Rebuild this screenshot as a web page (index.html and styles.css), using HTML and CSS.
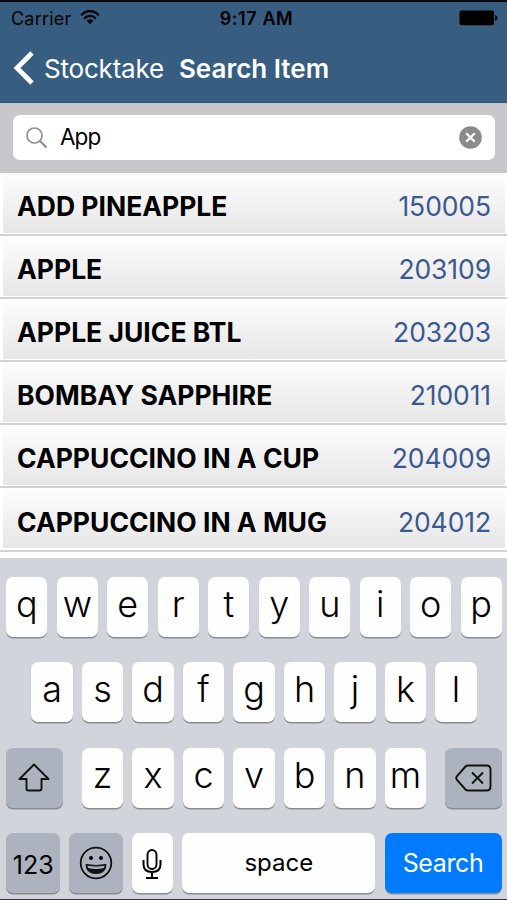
FILE: index.html
```html
<!DOCTYPE html>
<html lang="en">
<head>
    <meta charset="UTF-8">
    <meta name="viewport" content="width=device-width, initial-scale=1.0">
    <title>Search Item</title>
    <link rel="stylesheet" href="styles.css">
</head>
<body>
    <div class="phone">
        <header class="header">
            <div class="status">
                <div class="carrier">
                    <span>Carrier</span>
                    <svg class="wifi" viewBox="0 0 20 15" width="20" height="15">
                        <path d="M1.2 5.2C6-.4 14-.4 18.800 5.200M4.200 8.700C7.500 5 12.500 5 15.800 8.700" fill="none" stroke="#000" stroke-width="2.300"/>
                        <path d="M6.700 10.800Q10 7.800 13.300 10.800L10 14.200Z"/>
                    </svg>
                </div>
                <span class="time">9:17 AM</span>
                <svg class="battery" viewBox="0 0 39 16" width="39" height="16">
                    <rect x="0.500" y="0.500" width="34.500" height="14.800" rx="2"/>
                    <path d="M36 5Q38.500 6 38.500 8T36 11Z"/>
                </svg>
            </div>
            <nav class="nav">
                <svg class="back" viewBox="0 0 22 34" width="22" height="34">
                    <path d="M20 2L5 17L20 32" fill="none" stroke="#fff" stroke-width="4.800"/>
                </svg>
                <a class="nav-back">Stocktake</a>
                <h1 class="nav-title">Search Item</h1>
            </nav>
        </header>

        <div class="search-bar">
            <div class="search-field">
                <svg viewBox="0 0 22 22" width="22" height="22">
                    <circle cx="8.500" cy="8.500" r="7.500" fill="none" stroke="#8e8e93" stroke-width="1.700"/>
                    <path d="M13.700 13.700L20.500 20.500" stroke="#8e8e93" stroke-width="2.200"/>
                </svg>
                <span class="search-text">App</span>
                <svg viewBox="0 0 23 23" width="23" height="23">
                    <circle cx="11.500" cy="11.500" r="11.300" fill="#8b8b8b"/>
                    <path d="M7.200 7.200L15.800 15.800M15.800 7.200L7.200 15.800" stroke="#fff" stroke-width="2.300"/>
                </svg>
            </div>
        </div>

        <ul class="items">
            <li class="item"><span class="name">ADD PINEAPPLE</span><span class="code">150005</span></li>
            <li class="item"><span class="name">APPLE</span><span class="code">203109</span></li>
            <li class="item"><span class="name">APPLE JUICE BTL</span><span class="code">203203</span></li>
            <li class="item"><span class="name">BOMBAY SAPPHIRE</span><span class="code">210011</span></li>
            <li class="item"><span class="name">CAPPUCCINO IN A CUP</span><span class="code">204009</span></li>
            <li class="item"><span class="name">CAPPUCCINO IN A MUG</span><span class="code">204012</span></li>
        </ul>

        <div class="keyboard">
            <div class="keys">
                <span class="key">q</span><span class="key">w</span><span class="key">e</span><span class="key">r</span><span class="key">t</span><span class="key">y</span><span class="key">u</span><span class="key">i</span><span class="key">o</span><span class="key">p</span>
            </div>
            <div class="keys">
                <span class="key">a</span><span class="key">s</span><span class="key">d</span><span class="key">f</span><span class="key">g</span><span class="key">h</span><span class="key">j</span><span class="key">k</span><span class="key">l</span>
            </div>
            <div class="keys keys-wide">
                <span class="key dark shift">
                    <svg viewBox="0 0 32 29" width="32" height="29">
                        <path d="M16 1.500L30.500 16H23.500V25.500Q23.500 27.500 21.500 27.500H10.500Q8.500 27.500 8.500 25.500V16H1.500Z" fill="none" stroke="#111" stroke-width="1.900" stroke-linejoin="round"/>
                    </svg>
                </span>
                <div class="letters">
                    <span class="key">z</span><span class="key">x</span><span class="key">c</span><span class="key">v</span><span class="key">b</span><span class="key">n</span><span class="key">m</span>
                </div>
                <span class="key dark delete">
                    <svg viewBox="0 0 37 28" width="37" height="28">
                        <path d="M13 1.500H31.500Q35.500 1.500 35.500 5.500V22.500Q35.500 26.500 31.500 26.500H13Q11.500 26.500 10.500 25.500L2 16Q.5 14 2 12L10.500 2.500Q11.500 1.500 13 1.500Z" fill="none" stroke="#111" stroke-width="1.900"/>
                        <path d="M17 8.500L28 19.500M28 8.500L17 19.500" stroke="#111" stroke-width="1.900"/>
                    </svg>
                </span>
            </div>
            <div class="keys">
                <span class="key dark numbers">123</span>
                <span class="key dark emoji">
                    <svg viewBox="0 0 34 34" width="34" height="34">
                        <circle cx="17" cy="17" r="15.300" fill="none" stroke="#111" stroke-width="1.800"/>
                        <circle cx="12" cy="12" r="2"/>
                        <circle cx="22" cy="12" r="2"/>
                        <path d="M7 18.500Q17 20.500 27 18.500Q27 27.500 17 27.500T7 18.500Z" fill="#111" stroke="#111"/>
                        <path d="M8.500 19.700Q17 21.200 25.500 19.700L24.800 22Q17 23.800 9.200 22Z" fill="#a9b0bb"/>
                    </svg>
                </span>
                <span class="key mic">
                    <svg viewBox="0 0 20 31" width="20" height="31">
                        <rect x="5.500" y="1" width="9" height="19" rx="4.500" fill="none" stroke="#000" stroke-width="1.900"/>
                        <path d="M1.500 11V15.500Q1.500 23 10 23T18.500 15.500V11M10 23V29M4 29H16" fill="none" stroke="#000" stroke-width="2"/>
                    </svg>
                </span>
                <span class="key space">space</span>
                <span class="key search">Search</span>
            </div>
        </div>
    </div>
</body>
</html>
```
FILE: styles.css
```css
body {
    margin: 0;
    font-family: Inter, "Liberation Sans", sans-serif;
    color: #000;
}

.phone {
    display: flex;
    flex-direction: column;
    box-sizing: border-box;
    width: 507px;
    height: 900px;
    overflow: hidden;
    border-top: 2px solid #050a10;
    border-bottom: 1px solid #33373b;
}

/* header */
.header {
    height: 101px;
    box-sizing: border-box;
    background: #375d81;
    border-bottom: 1px solid #2d5578;
}

.status {
    display: grid;
    grid-template-columns: 1fr auto 1fr;
    align-items: center;
    height: 32px;
    padding: 0 9px 0 11px;
    font-size: 18px;
}

.carrier {
    display: flex;
    align-items: center;
    gap: 9px;
    letter-spacing: 0.2px;
}

.wifi {
    margin-top: -2px;
}

.time {
    padding-left: 4px;
    font-weight: 600;
    letter-spacing: 0.6px;
}

.battery {
    justify-self: end;
}

.nav {
    display: flex;
    align-items: center;
    height: 68px;
    padding-left: 12px;
    color: #fff;
    font-size: 26px;
}

.nav-back {
    margin-left: 10px;
    letter-spacing: -0.2px;
}

.nav-title {
    margin: 0 0 0 15px;
    font-size: 26px;
    font-weight: 600;
}

/* search */
.search-bar {
    height: 69.5px;
    box-sizing: border-box;
    padding: 12px 12px 0 13px;
    background: #c7c7cc;
}

.search-field {
    display: flex;
    align-items: center;
    height: 45px;
    box-sizing: border-box;
    padding: 0 13px 0 13px;
    border-radius: 7px;
    background: #fff;
}

.search-text {
    flex: 1;
    margin-left: 12px;
    padding-bottom: 2px;
    font-size: 22.5px;
    letter-spacing: -0.9px;
}

/* list */
.items {
    height: 385.5px;
    margin: 0;
    padding: 0;
    list-style: none;
    background: #fff;
}

.item {
    display: flex;
    justify-content: space-between;
    align-items: center;
    box-sizing: border-box;
    height: 63.2px;
    padding: 5px 16px 0 17px;
    border-bottom: 2px solid #d2d2d2;
    background: linear-gradient(#fdfdfd, #e6e6e6) 3px 0 / 502px 60px no-repeat;
    font-size: 26.5px;
}

.name {
    font-weight: 700;
}

.code {
    color: #3b5990;
    letter-spacing: -0.1px;
}

/* keyboard */
.keyboard {
    display: flex;
    flex-direction: column;
    gap: 25.4px;
    flex: 1;
    padding: 19px 5px 0 6px;
    background: #d1d5db;
}

.keys {
    display: flex;
    justify-content: center;
    gap: 9.2px;
}

.keys-wide {
    justify-content: space-between;
}

.letters {
    display: flex;
    gap: 9.2px;
}

.key {
    display: flex;
    justify-content: center;
    align-items: center;
    flex: none;
    box-sizing: border-box;
    width: 41.3px;
    height: 60px;
    padding-bottom: 6px;
    border-radius: 7px;
    background: #fefefe;
    box-shadow: 0 1.5px 0 #898c91;
    font-size: 36px;
    font-weight: 350;
}

.dark {
    padding-bottom: 0;
    background: #acb3be;
}

.shift,
.delete {
    width: 56.5px;
}

.numbers,
.emoji {
    width: 53.5px;
}

.numbers {
    padding-top: 3px;
    font-size: 25px;
    font-weight: 400;
}

.mic {
    padding: 2px 0 0;
}

.space {
    width: 193px;
    padding-bottom: 2px;
    font-size: 24px;
    font-weight: 400;
}

.search {
    width: 117px;
    padding-bottom: 1px;
    background: #007aff;
    color: #fff;
    font-size: 25px;
    font-weight: 400;
    letter-spacing: -0.4px;
}
```
